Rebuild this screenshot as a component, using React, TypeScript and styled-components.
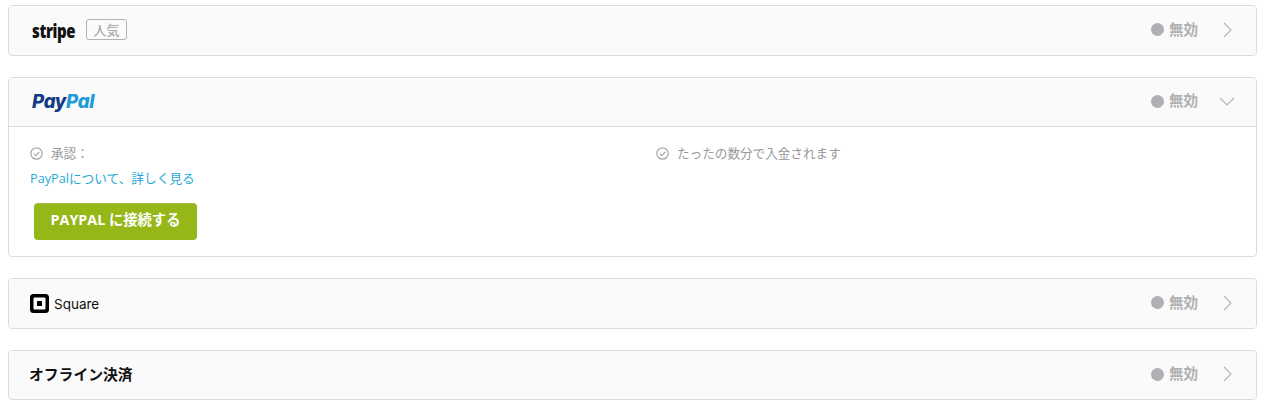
import React from "react";
import styled, { createGlobalStyle } from "styled-components";

const Global = createGlobalStyle`
  html, body { margin: 0; padding: 0; background: #fff; }
  body { font-family: "Open Sans", "Noto Sans CJK JP", sans-serif; }
`;

const Page = styled.div`
  display: flex;
  flex-direction: column;
  gap: 21px;
  padding: 5px 13px 0 8px;
`;

const Card = styled.section`
  border: 1px solid #dcdcdc;
  border-radius: 4px;
  background: #fff;
  overflow: hidden;
`;

const Header = styled.div<{ $open?: boolean; $h?: number }>`
  display: flex;
  align-items: center;
  height: ${(p) => p.$h ?? 49}px;
  padding: 0 21px 0 21px;
  background: #fafafa;
  border-bottom: ${(p) => (p.$open ? "1px solid #dcdcdc" : "0")};
`;

const Brand = styled.div`
  display: flex;
  align-items: center;
  flex: 1;
  min-width: 0;
`;

const StripeLogo = styled.span`
  display: inline-block;
  margin-left: 2px;
  font: 800 20px/24px "Open Sans", sans-serif;
  letter-spacing: -0.5px;
  color: #111;
  transform: scaleX(0.75);
  transform-origin: left center;
  width: 45px;
`;

const Tag = styled.span`
  box-sizing: border-box;
  width: 41px;
  height: 21px;
  margin-left: 9px;
  margin-bottom: 2px;
  border: 1px solid #b3b3b3;
  border-radius: 3px;
  color: #aaa;
  font: 500 13px/19px "Noto Sans CJK JP", sans-serif;
  text-align: center;
`;

const PayPalLogo = styled.span`
  margin-left: 2px;
  margin-bottom: 2px;
  font: italic 800 18.6px/24px Inter, sans-serif;
  letter-spacing: -0.3px;
  color: #123a86;
`;

const PayPalLight = styled.span`
  color: #1d9bdc;
`;

const SquareName = styled.span`
  margin-left: 5px;
  font: 400 13.5px/20px Inter, sans-serif;
  color: #111;
`;

const OfflineName = styled.span`
  margin-left: -1px;
  margin-bottom: 2px;
  font: 700 14.8px/20px "Noto Sans CJK JP", sans-serif;
  color: #111;
`;

const Status = styled.div`
  display: flex;
  align-items: center;
  gap: 5px;
  color: #aeb0b3;
  font: 700 14.5px/20px "Noto Sans CJK JP", sans-serif;
`;

const StatusText = styled.span`
  margin-bottom: 4px;
`;

const Dot = styled.span`
  width: 13px;
  height: 13px;
  margin-bottom: 2px;
  border-radius: 50%;
  background: #aeb0b3;
`;

const ChevronBox = styled.div`
  display: flex;
  justify-content: center;
  width: 16px;
  margin-left: 21px;
  margin-bottom: 2px;
  color: #b4b6b9;
`;

const Body = styled.div`
  padding: 17px 21px 16px;
  height: 96px;
  box-sizing: content-box;
`;

const Features = styled.div`
  display: grid;
  grid-template-columns: 626px 1fr;
`;

const Feature = styled.div`
  display: flex;
  align-items: center;
  gap: 8px;
  height: 18px;
  font: 400 12.6px/18px "Noto Sans CJK JP", sans-serif;
  color: #999;
`;

const LearnMore = styled.a`
  display: block;
  margin-top: 7px;
  font: 400 12.7px/18px "Open Sans", "Noto Sans CJK JP", sans-serif;
  color: #1fa9d6;
`;

const ConnectButton = styled.button`
  display: block;
  width: 163px;
  height: 37px;
  margin: 16px 0 0 4px;
  padding: 0 0 5px;
  border: 0;
  border-top: 1px solid #a3bd4a;
  border-radius: 4px;
  background: #95b718;
  color: #fff;
  font: 700 14.3px/20px "Open Sans", "Noto Sans CJK JP", sans-serif;
`;

const Chevron = ({ open }: { open?: boolean }) =>
  open ? (
    <svg width="16" height="9" viewBox="0 0 16 9" fill="none">
      <path d="M1 1l7 7 7-7" stroke="currentColor" strokeWidth="1.2" />
    </svg>
  ) : (
    <svg width="9" height="16" viewBox="0 0 9 16" fill="none">
      <path d="M1 1l7 7-7 7" stroke="currentColor" strokeWidth="1.2" />
    </svg>
  );

const CheckIcon = () => (
  <svg width="13" height="13" viewBox="0 0 13 13" fill="none" stroke="#a5a7aa" strokeWidth="1.2">
    <circle cx="6.5" cy="6.5" r="5.7" />
    <path d="M4 6.7l1.900 1.900L9.200 5" />
  </svg>
);

const SquareIcon = () => (
  <svg width="19" height="19" viewBox="0 0 19 19">
    <path
      fillRule="evenodd"
      d="M3.500 0h12A3.500 3.500 0 0 1 19 3.500v12a3.500 3.500 0 0 1-3.500 3.500h-12A3.500 3.500 0 0 1 0 15.500v-12A3.500 3.500 0 0 1 3.500 0zM4.500 3.500a1 1 0 0 0-1 1v10a1 1 0 0 0 1 1h10a1 1 0 0 0 1-1v-10a1 1 0 0 0-1-1z"
      fill="#000"
    />
    <rect x="7" y="7" width="5" height="5" rx="0.6" fill="#000" />
  </svg>
);

const StatusBlock = ({ open }: { open?: boolean }) => (
  <>
    <Status>
      <Dot />
      <StatusText>無効</StatusText>
    </Status>
    <ChevronBox>
      <Chevron open={open} />
    </ChevronBox>
  </>
);

export default function App() {
  return (
    <>
      <Global />
      <Page>
        <Card>
          <Header>
            <Brand>
              <StripeLogo>stripe</StripeLogo>
              <Tag>人気</Tag>
            </Brand>
            <StatusBlock />
          </Header>
        </Card>
        <Card>
          <Header $open $h={48}>
            <Brand>
              <PayPalLogo>
                Pay<PayPalLight>Pal</PayPalLight>
              </PayPalLogo>
            </Brand>
            <StatusBlock open />
          </Header>
          <Body>
            <Features>
              <Feature>
                <CheckIcon />
                承認：
              </Feature>
              <Feature>
                <CheckIcon />
                たったの数分で入金されます
              </Feature>
            </Features>
            <LearnMore>PayPalについて、詳しく見る</LearnMore>
            <ConnectButton>PAYPAL に接続する</ConnectButton>
          </Body>
        </Card>
        <Card>
          <Header>
            <Brand>
              <SquareIcon />
              <SquareName>Square</SquareName>
            </Brand>
            <StatusBlock />
          </Header>
        </Card>
        <Card>
          <Header $h={48}>
            <Brand>
              <OfflineName>オフライン決済</OfflineName>
            </Brand>
            <StatusBlock />
          </Header>
        </Card>
      </Page>
    </>
  );
}
